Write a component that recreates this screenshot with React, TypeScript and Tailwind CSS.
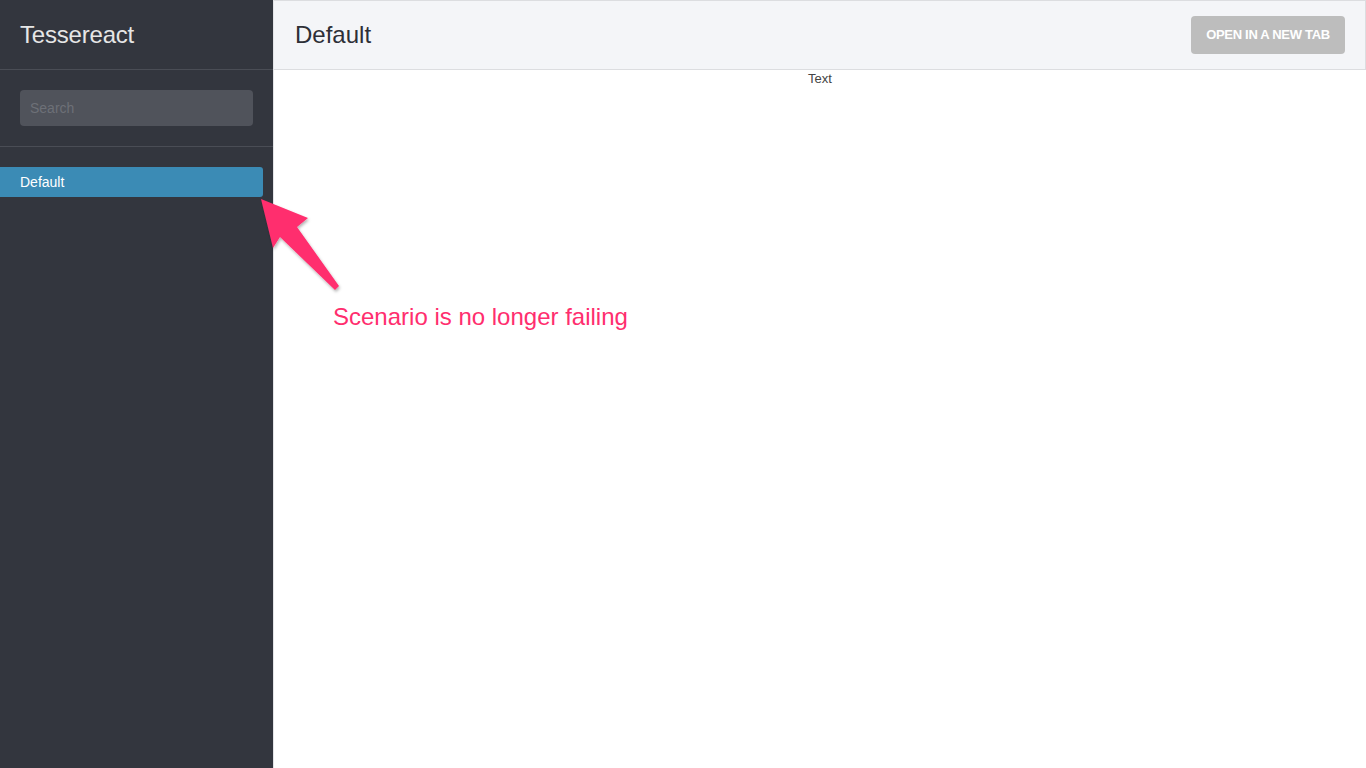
export default function App() {
  return (
    <div
      className="relative flex h-[768px] w-[1366px] overflow-hidden bg-white"
      style={{ fontFamily: '"Liberation Sans", Arial, sans-serif' }}
    >
      <aside className="flex w-[273px] shrink-0 flex-col bg-[#33363e]">
        <div className="flex h-[70px] items-center border-b border-[#4a4d55] px-5">
          <h1 className="text-[24px] tracking-[-0.2px] text-[#e6e6e6]">Tessereact</h1>
        </div>
        <div className="border-b border-[#4a4d55] px-5 pt-5 pb-5">
          <input
            placeholder="Search"
            className="h-[36px] w-[233px] rounded-[4px] bg-[#50535b] px-[10px] text-[14px] text-white outline-none placeholder:text-[#6d7077]"
          />
        </div>
        <nav className="pt-5 pr-[10px]">
          <div className="flex h-[30px] items-center rounded-r-[3px] bg-[#3b8bb5] px-5 text-[14px] text-white">
            Default
          </div>
        </nav>
      </aside>

      <main className="flex flex-1 flex-col border-l border-[#e3e4e7]">
        <header className="flex h-[70px] items-center justify-between border-t border-r border-b border-[#dcdde0] bg-[#f4f5f8] pr-[20px] pl-[21px]">
          <h2 className="text-[24px] text-[#2d2f37]">Default</h2>
          <button className="h-[38px] w-[154px] rounded-[4px] bg-[#bdbdbd] text-[13px] font-bold tracking-[-0.3px] text-white">
            OPEN IN A NEW TAB
          </button>
        </header>
        <div className="pt-[1px] text-center text-[13px] leading-[15px] text-[#444]">Text</div>
      </main>

      <svg
        className="pointer-events-none absolute top-0 left-0"
        width="1366"
        height="768"
      >
        <defs>
          <filter id="sh" x="-20%" y="-20%" width="140%" height="140%">
            <feDropShadow dx="1" dy="2" stdDeviation="1.5" floodColor="#000" floodOpacity="0.3" />
          </filter>
        </defs>
        <path
          d="M261 199 L308 218 L297 227 L339 286 L335 290 L280 237 L273 248 Z"
          fill="#ff2e6e"
          filter="url(#sh)"
        />
      </svg>
      <div className="absolute top-[299px] left-[333px] text-[24px] text-[#ff2e6e]">
        Scenario is no longer failing
      </div>
    </div>
  );
}
